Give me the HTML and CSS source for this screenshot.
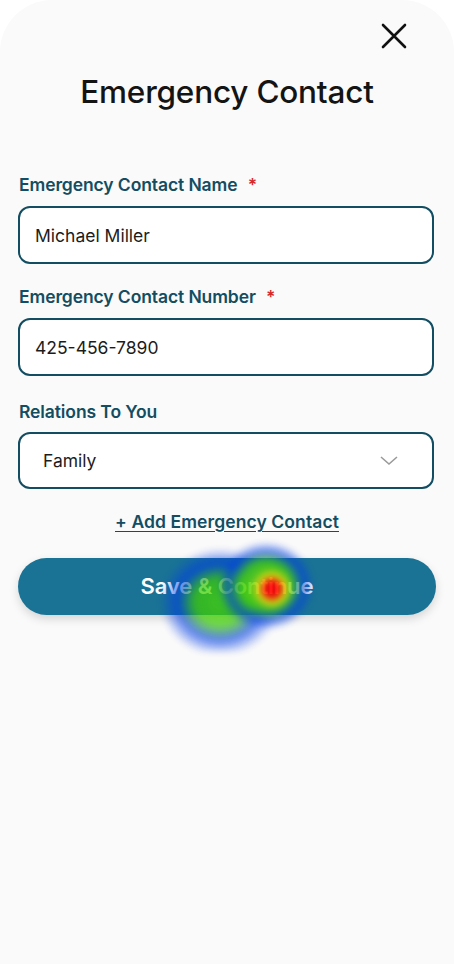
FILE: index.html
```html
<!DOCTYPE html>
<html>
	<head>
		<meta charset="UTF-8">
		<title>Emergency Contact</title>
		<link rel="stylesheet" href="styles.css">
	</head>
	<body>
		<div class="sheet">
			<div class="top">
				<a href="#" class="close">
					<svg width="26" height="26" viewBox="0 0 26 26">
						<path d="M2 2 L24 24 M24 2 L2 24" stroke="#111" stroke-width="2.6" stroke-linecap="round" fill="none" />
					</svg>
				</a>
			</div>
			<h1 class="title">Emergency Contact</h1>

			<div class="form">
				<div class="field">
					<label class="label">Emergency Contact Name <span class="req">*</span></label>
					<div class="box">Michael Miller</div>
				</div>
				<div class="field">
					<label class="label">Emergency Contact Number <span class="req">*</span></label>
					<div class="box">425-456-7890</div>
				</div>
				<div class="field field-last">
					<label class="label">Relations To You</label>
					<div class="box select">
						<span>Family</span>
						<svg width="18" height="10" viewBox="0 0 18 10">
							<path d="M1 1 L9 8 L17 1" stroke="#9a9a9a" stroke-width="1.6" fill="none" />
						</svg>
					</div>
				</div>
			</div>

			<a href="#" class="add">+ Add Emergency Contact</a>

			<div class="btn-wrap">
				<a href="#" class="btn">Save &amp; Continue</a>
				<!-- heatmap overlay -->
				<div class="heat"></div>
			</div>
		</div>
	</body>
</html>
```

FILE: styles.css
```css
* {
	margin: 0;
	padding: 0;
	box-sizing: border-box;
}

body {
	background: #fff;
	font-family: Inter, "Liberation Sans", sans-serif;
}

a {
	text-decoration: none;
}

.sheet {
	min-height: 964px;
	background: #fafafa;
	border-radius: 52px 52px 0 0;
	padding: 0 18px;
}

.top {
	display: flex;
	justify-content: flex-end;
	padding: 23px 29px 0 0;
}

.close {
	display: block;
	width: 26px;
	height: 26px;
}

.title {
	text-align: center;
	font-size: 31.5px;
	font-weight: 500;
	color: #141414;
	letter-spacing: -0.2px;
	margin-top: 25px;
	line-height: 36px;
}

.form {
	margin-top: 64px;
	padding-right: 2px;
	display: flex;
	flex-direction: column;
	gap: 22px;
}

.field {
	display: flex;
	flex-direction: column;
	gap: 10px;
}

.field-last {
	margin-top: 3px;
	gap: 9px;
}

.label {
	font-size: 17.5px;
	font-weight: 600;
	color: #124d62;
	line-height: 22px;
	padding-left: 1px;
	letter-spacing: -0.1px;
}

.req {
	color: #d42a2a;
	margin-left: 6px;
}

.box {
	height: 58px;
	border: 2px solid #124d62;
	border-radius: 12px;
	background: #fff;
	display: flex;
	align-items: center;
	padding: 0 15px;
	font-size: 17.5px;
	color: #1c1c1c;
}

.select {
	height: 57px;
	justify-content: space-between;
	padding: 0 34px 0 23px;
}

.add {
	display: block;
	text-align: center;
	margin-top: 22px;
	font-size: 17.5px;
	font-weight: 600;
	color: #124d62;
	text-decoration: underline;
	text-underline-offset: 3px;
	line-height: 22px;
	letter-spacing: 0.1px;
}

.btn-wrap {
	position: relative;
	margin-top: 25px;
}

.btn {
	display: block;
	height: 57px;
	line-height: 57px;
	border-radius: 29px;
	background: #1a7394;
	color: #fff;
	text-align: center;
	font-size: 22px;
	font-weight: 600;
	letter-spacing: -0.1px;
	box-shadow: 0 4px 10px rgba(0, 0, 0, 0.15);
}

.heat {
	position: absolute;
	left: 138px;
	top: -22px;
	width: 180px;
	height: 116px;
	pointer-events: none;
	opacity: 0.9;
	filter: blur(3px);
	background:
		radial-gradient(circle at 116px 53px, #ff0000 0, #ff0000 8px, rgba(255, 230, 0, 0.9) 13px, rgba(150, 230, 0, 0) 21px),
		radial-gradient(ellipse 48px 44px at 110px 50px, rgba(130, 230, 0, 0.9) 0, rgba(70, 215, 0, 0.85) 52%, rgba(0, 60, 230, 0.7) 78%, rgba(110, 110, 255, 0) 100%),
		radial-gradient(ellipse 60px 54px at 64px 66px, rgba(70, 215, 0, 0.85) 0, rgba(60, 205, 0, 0.8) 42%, rgba(0, 60, 230, 0.7) 70%, rgba(110, 110, 255, 0) 100%);
}
```
